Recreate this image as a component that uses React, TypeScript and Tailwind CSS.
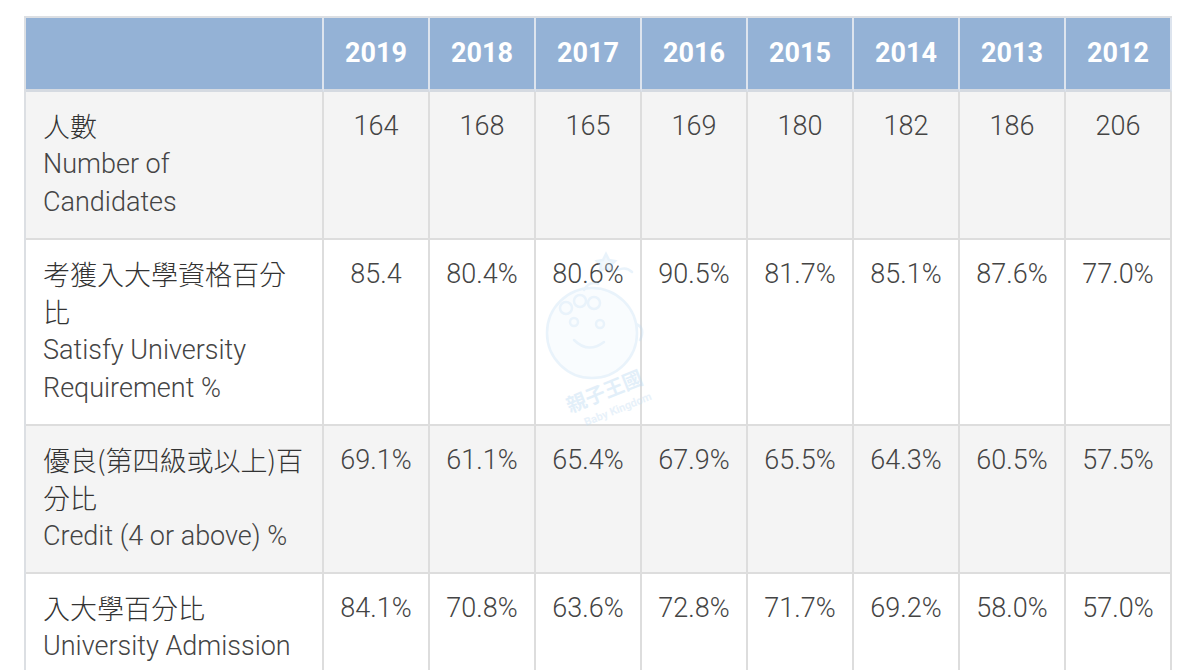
import React from "react";

const years = ["2019", "2018", "2017", "2016", "2015", "2014", "2013", "2012"];

const rows: { zh: string; en: string; values: string[]; bg: string }[] = [
  {
    zh: "人數",
    en: "Number of Candidates",
    values: ["164", "168", "165", "169", "180", "182", "186", "206"],
    bg: "bg-[#f4f4f4]",
  },
  {
    zh: "考獲入大學資格百分比",
    en: "Satisfy University Requirement %",
    values: ["85.4", "80.4%", "80.6%", "90.5%", "81.7%", "85.1%", "87.6%", "77.0%"],
    bg: "bg-white",
  },
  {
    zh: "優良(第四級或以上)百分比",
    en: "Credit (4 or above) %",
    values: ["69.1%", "61.1%", "65.4%", "67.9%", "65.5%", "64.3%", "60.5%", "57.5%"],
    bg: "bg-[#f4f4f4]",
  },
  {
    zh: "入大學百分比",
    en: "University Admission %",
    values: ["84.1%", "70.8%", "63.6%", "72.8%", "71.7%", "69.2%", "58.0%", "57.0%"],
    bg: "bg-white",
  },
];

function Watermark() {
  return (
    <svg
      className="absolute left-[500px] top-[222px] pointer-events-none"
      width="140"
      height="190"
      viewBox="0 0 140 190"
    >
      <g opacity="0.3" fill="none" stroke="#b9d8f2" strokeWidth="2.5" strokeLinecap="round">
        <path d="M80 14 l3 6 6 1 -4 4 1 6 -6 -3 -6 3 1 -6 -4 -4 6 -1z" fill="#d3e6f7" />
        <path d="M92 30 q8 -4 14 2" />
        <circle cx="66" cy="93" r="45" fill="#eef6fd" />
        <circle cx="40" cy="68" r="6" />
        <circle cx="54" cy="61" r="6" />
        <circle cx="68" cy="63" r="6" />
        <path d="M58 50 q6 -10 14 -6" />
        <circle cx="48" cy="82" r="4" />
        <circle cx="74" cy="84" r="4" />
        <path d="M48 100 q14 14 30 2" />
        <path d="M110 84 q10 4 4 16" />
      </g>
      <g opacity="0.4" transform="rotate(-22 80 150)">
        <text
          x="38"
          y="158"
          fill="#b9d8f2"
          fontSize="20"
          fontWeight="700"
          fontFamily='"Noto Sans CJK TC", sans-serif'
        >
          親子王國
        </text>
        <text
          x="48"
          y="176"
          fill="#c6def3"
          fontSize="11"
          fontWeight="700"
          fontFamily="Roboto, sans-serif"
        >
          Baby Kingdom
        </text>
      </g>
    </svg>
  );
}

export default function App() {
  return (
    <div className="min-h-[670px] bg-white pt-[16px] pl-[24px] font-['Roboto','Noto_Sans_CJK_TC',sans-serif]">
      <div className="relative w-fit border-l-2 border-t-2 border-[#dcdfe3]">
        <div className="grid grid-cols-[298px_repeat(8,106px)]">
          <div className="h-[74px] bg-[#94b2d6] border-r-2 border-b-[3px] border-r-[#dde4ee] border-b-[#d5dae1]" />
          {years.map((y) => (
            <div
              key={y}
              className="h-[74px] pb-[2px] flex items-center justify-center bg-[#94b2d6] border-r-2 border-b-[3px] border-r-[#dde4ee] border-b-[#d5dae1] text-white font-bold text-[27px] leading-[38px] font-['Roboto',sans-serif]"
            >
              {y}
            </div>
          ))}
        </div>
        {rows.map((r) => (
          <div key={r.zh} className={`grid grid-cols-[298px_repeat(8,106px)] ${r.bg}`}>
            <div className="border-r-2 border-b-2 border-[#dddddd] pl-[17px] pr-[14px] pt-[15px] pb-[17px] text-[27px] leading-[38px] text-[#444] font-light">
              <div className="font-light text-[#333] font-['Noto_Sans_CJK_TC',sans-serif] text-[27px]">{r.zh}</div>
              <div>{r.en}</div>
            </div>
            {r.values.map((v, i) => (
              <div
                key={i}
                className="border-r-2 border-b-2 border-[#dddddd] pt-[15px] pb-[17px] text-center text-[27px] leading-[38px] text-[#444] font-light"
              >
                {v}
              </div>
            ))}
          </div>
        ))}
        <Watermark />
      </div>
    </div>
  );
}
